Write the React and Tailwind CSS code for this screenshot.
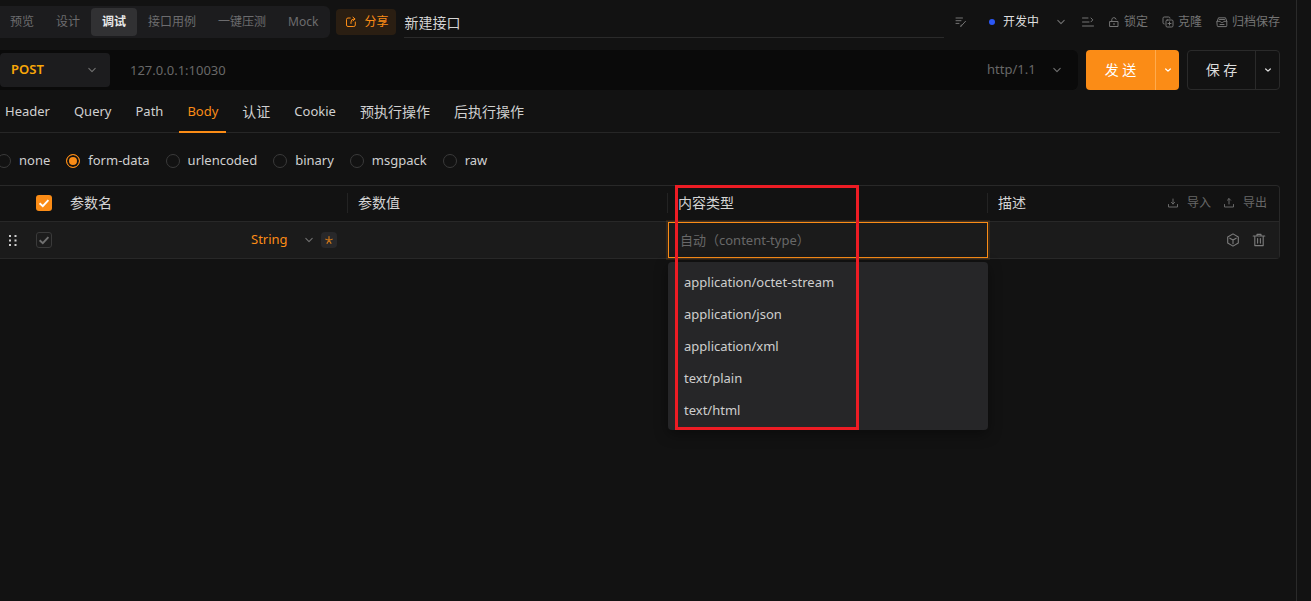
import React from "react";

const MODES = ["预览", "设计", "调试", "接口用例", "一键压测", "Mock"];
const TABS = ["Header", "Query", "Path", "Body", "认证", "Cookie", "预执行操作", "后执行操作"];
const BODY_TYPES = ["none", "form-data", "urlencoded", "binary", "msgpack", "raw"];
const CONTENT_TYPES = [
  "application/octet-stream",
  "application/json",
  "application/xml",
  "text/plain",
  "text/html",
];

const isLatin = (text) => /^[\x00-\x7f]+$/.test(text);

function Icon({ className = "size-3", box = 12, sw = 1, children }) {
  return (
    <svg
      viewBox={`0 0 ${box} ${box}`}
      className={`shrink-0 ${className}`}
      fill="none"
      stroke="currentColor"
      strokeWidth={sw}
      strokeLinecap="round"
      strokeLinejoin="round"
      aria-hidden="true"
    >
      {children}
    </svg>
  );
}

function Chevron() {
  return (
    <Icon sw={1.1}>
      <path d="M2.800 4.400 6 7.600l3.200-3.200" />
    </Icon>
  );
}

function Picker({ label, options, className, text, chevron }) {
  return (
    <div className={`grid items-center ${className}`}>
      <select
        aria-label={label}
        className={`col-start-1 row-start-1 h-full w-full appearance-none bg-transparent outline-none ${text}`}
      >
        {options.map((option) => (
          <option key={option}>{option}</option>
        ))}
      </select>
      <span className={`pointer-events-none col-start-1 row-start-1 justify-self-end text-[#707070] ${chevron}`}>
        <Chevron />
      </span>
    </div>
  );
}

function ToolButton({ label, children }) {
  return (
    <button type="button" className="flex items-center gap-1 text-xs text-[#747474]">
      {children}
      {label}
    </button>
  );
}

function Toolbar() {
  return (
    <div className="flex h-8 items-center">
      <nav className="-ml-px flex h-8 items-center rounded-r-md bg-[#1c1c1e] pr-px">
        {MODES.map((mode) => (
          <button
            key={mode}
            type="button"
            className={
              mode === "调试"
                ? "h-7 rounded bg-[#313133] px-[11px] text-xs font-bold text-[#e8e8e8]"
                : "h-7 px-[11px] text-xs text-[#6c6c6e]"
            }
          >
            {mode}
          </button>
        ))}
      </nav>
      <button
        type="button"
        className="ml-1.5 flex h-[26px] items-center gap-1.5 rounded bg-[#2a1e12] px-2 text-xs text-[#fb8c16]"
      >
        <Icon className="size-3.5" box={14}>
          <path d="M6.300 3H4A1.500 1.500 0 0 0 2.500 4.500v5.500A1.500 1.500 0 0 0 4 11.500h5.800a1.500 1.500 0 0 0 1.500-1.500V7" />
          <path d="M7 8.500V7A3 3 0 0 1 10 4M9 2.200 11.100 4 9 5.800" />
        </Icon>
        分享
      </button>
      <input
        aria-label="接口名称"
        defaultValue="新建接口"
        className="ml-2 h-8 min-w-0 flex-1 border-b border-[#2a2a2a] bg-transparent text-sm text-[#d4d4d4] outline-none"
      />
      <div className="flex items-center pl-[11px] text-[#747474]">
        <button type="button" aria-label="编辑描述">
          <Icon>
            <path d="M1 2h6.500M1 4.700h5M1 7.400h3M6 10.300l4.500-5M5.900 10.400l.3-1.400" />
          </Icon>
        </button>
        <span className="ml-[22px] size-1.5 rounded-full bg-[#2b57f5]" />
        <Picker
          label="状态"
          options={["开发中"]}
          className="ml-2 h-6 w-16"
          text="text-xs text-[#dedede]"
          chevron=""
        />
        <button type="button" aria-label="收起" className="ml-[15px] mr-3.5">
          <Icon>
            <path d="M.5 2h5.500M.5 6h6.500M.5 10h11M9 2l1.800 1.900L9 5.800" />
          </Icon>
        </button>
        <div className="flex items-center gap-3.5">
          <ToolButton label="锁定">
            <Icon>
              <path d="M2 5.500h8v5H2zM3.800 5.300V3.700a2.200 2.200 0 0 1 4.300-.5M6 7.400v1.300" />
            </Icon>
          </ToolButton>
          <ToolButton label="克隆">
            <Icon>
              <rect x="4" y="4" width="7" height="7" rx="1.200" />
              <path d="M2.200 8a1.200 1.200 0 0 1-1.200-1.200V2.200A1.200 1.200 0 0 1 2.200 1h4.600A1.200 1.200 0 0 1 8 2.200M7.500 6v3M6 7.500h3" />
            </Icon>
          </ToolButton>
          <ToolButton label="归档保存">
            <Icon>
              <path d="M1.200 5.300 2.500 1.800h7l1.300 3.500M3.500 3.500h5M1.200 5.300h2.900c.3 1 1 1.200 1.900 1.200s1.600-.2 1.900-1.200h2.900v4.500a.8.8 0 0 1-.8.8H2a.8.8 0 0 1-.8-.8zM4 8.500h4" />
            </Icon>
          </ToolButton>
        </div>
      </div>
    </div>
  );
}

function SplitButton({ label, className, divider }) {
  return (
    <div className={`flex h-10 w-[93px] items-stretch overflow-hidden rounded ${className}`}>
      <button type="button" className="flex-1 whitespace-pre text-sm">
        {label}
      </button>
      <button
        type="button"
        aria-label={`${label} 更多`}
        className={`flex w-6 items-center justify-center border-l ${divider}`}
      >
        <Icon className="size-2.5" sw={1.500}>
          <path d="M3.200 4.800 6 7.400l2.800-2.600" />
        </Icon>
      </button>
    </div>
  );
}

function RequestBar() {
  return (
    <div className="mt-3 flex items-center gap-2">
      <div className="flex h-10 min-w-0 flex-1 items-center rounded-r-md bg-[#0a0a0a] pr-[15px]">
        <Picker
          label="请求方法"
          options={["POST"]}
          className="h-[34px] w-[110px] rounded bg-[#1c1c1e]"
          text="pl-[11px] text-[13px] font-semibold text-[#f9a708]"
          chevron="mr-3"
        />
        <input
          aria-label="请求地址"
          placeholder="127.0.0.1:10030"
          className="h-8 min-w-0 flex-1 bg-transparent pl-5 text-[13px] outline-none placeholder:text-[#686868]"
        />
        <Picker
          label="协议"
          options={["http/1.1"]}
          className="h-8 w-[76px]"
          text="text-[13px] text-[#686868]"
          chevron=""
        />
      </div>
      <SplitButton label="发 送" className="bg-[#fb8c16] text-white" divider="border-[#ffab4d]" />
      <SplitButton label="保 存" className="border border-[#2a2a2a] text-[#dcdcdc]" divider="border-[#2a2a2a]" />
    </div>
  );
}

function CheckBox({ label, active }) {
  return (
    <label className="mx-auto grid size-4">
      <input
        type="checkbox"
        defaultChecked
        aria-label={label}
        className={
          active
            ? "col-start-1 row-start-1 size-4 appearance-none rounded-[3px] bg-[#fb8c16]"
            : "col-start-1 row-start-1 size-4 appearance-none rounded-[3px] border border-[#3a3a3a] bg-[#1c1c1c]"
        }
      />
      <span
        className={
          active
            ? "pointer-events-none col-start-1 row-start-1 place-self-center text-white"
            : "pointer-events-none col-start-1 row-start-1 place-self-center text-[#707070]"
        }
      >
        <Icon sw={1.900}>
          <path d="M1.600 6.200 4.800 9.200l5.600-6" strokeLinecap="butt" strokeLinejoin="miter" />
        </Icon>
      </span>
    </label>
  );
}

function HeadCell({ children, action, last }) {
  return (
    <th scope="col" className="p-0 text-left text-sm font-normal text-[#d4d4d4]">
      <div className={`flex h-5 items-center pl-2.5 pr-3 ${last ? "" : "border-r border-[#232323]"}`}>
        <span className="flex-1">{children}</span>
        {action}
      </div>
    </th>
  );
}

function ParamTable() {
  return (
    <div className="relative mt-3.5 rounded-r border-y border-r border-[#282828]">
      <table className="w-full table-fixed border-collapse">
        <colgroup>
          <col className="w-7" />
          <col className="w-8" />
          <col className="w-72" />
          <col className="w-80" />
          <col className="w-80" />
          <col />
        </colgroup>
        <thead>
          <tr className="h-[35px] border-b border-[#282828]">
            <td />
            <td className="p-0">
              <CheckBox label="全选" active />
            </td>
            <HeadCell>参数名</HeadCell>
            <HeadCell>参数值</HeadCell>
            <HeadCell>内容类型</HeadCell>
            <HeadCell
              last
              action={
                <span className="flex items-center gap-3 text-xs text-[#686868]">
                  <button type="button" className="flex items-center gap-2">
                    <Icon>
                      <path d="M1.500 7.500v2.500h9V7.500M6 2v5M4.400 5.400 6 7l1.600-1.600" />
                    </Icon>
                    导入
                  </button>
                  <button type="button" className="flex items-center gap-2">
                    <Icon>
                      <path d="M1.500 7.500v2.500h9V7.500M6 7V1.600M4.400 3.200 6 1.600l1.600 1.600" />
                    </Icon>
                    导出
                  </button>
                </span>
              }
            >
              描述
            </HeadCell>
          </tr>
        </thead>
        <tbody>
          <tr className="h-9 bg-[#1b1b1b]">
            <td className="p-0">
              <svg viewBox="0 0 8 11" className="ml-[9px] mt-0.5 h-[11px] w-2 fill-[#cfcfcf]" aria-hidden="true">
                <path d="M0 0h2v2H0zM5.500 0h2v2h-2zM0 4.500h2v2H0zM5.500 4.500h2v2h-2zM0 9h2v2H0zM5.500 9h2v2h-2z" />
              </svg>
            </td>
            <td className="p-0">
              <CheckBox label="启用参数" />
            </td>
            <td className="p-0">
              <div className="flex items-center justify-end gap-1.5 pr-[11px]">
                <Picker
                  label="参数类型"
                  options={["String"]}
                  className="h-6 w-16"
                  text="text-[13px] text-[#fb8c16]"
                  chevron=""
                />
                <button
                  type="button"
                  aria-label="必填"
                  className="flex size-4 items-center justify-center rounded-sm bg-[#28282a] text-[#c9741a]"
                >
                  <Icon sw={1.200}>
                    <path d="M6 2.600v3.600M6 6.200 2.800 5.200M6 6.200l3.200-1M6 6.200 4 9.300M6 6.200l2 3.100" />
                  </Icon>
                </button>
              </div>
            </td>
            <td />
            <td className="relative p-0 align-top">
              <input
                role="combobox"
                aria-expanded="true"
                aria-controls="content-types"
                aria-label="内容类型"
                placeholder="自动（content-type）"
                className="block h-9 w-full border border-[#fb8c16] bg-transparent pl-[11px] text-[13px] shadow-[0_0_0_2px_rgba(251,140,22,0.12)] outline-none placeholder:text-[#686868]"
              />
              <ul
                id="content-types"
                role="listbox"
                className="absolute left-0 top-10 w-full rounded bg-[#262628] py-1 shadow-[0_4px_14px_rgba(0,0,0,0.4)]"
              >
                {CONTENT_TYPES.map((type) => (
                  <li
                    key={type}
                    role="option"
                    aria-selected="false"
                    className="h-8 px-4 text-[13px] leading-8 text-[#cecece]"
                  >
                    {type}
                  </li>
                ))}
              </ul>
            </td>
            <td className="p-0">
              <div className="flex items-center justify-end gap-3 pr-[13px] text-[#7c7c7c]">
                <button type="button" aria-label="参数设置">
                  <Icon className="size-3.5" box={14} sw={1.100}>
                    <path d="M7 .9 12.300 4v6L7 13.100 1.700 10V4zM3.800 5.200 7 7l3.200-1.800M7 7v3.700" />
                  </Icon>
                </button>
                <button type="button" aria-label="删除">
                  <Icon className="size-3.5" box={14} sw={1.100}>
                    <path d="M1.200 3h11.600M5 3V1.400h4V3M2.800 3v9.600h8.400V3M5.600 5.600v4.500M8.400 5.600v4.500" />
                  </Icon>
                </button>
              </div>
            </td>
          </tr>
        </tbody>
      </table>
      <div className="pointer-events-none absolute -top-px left-[675px] h-[245px] w-[184px] border-3 border-[#ed1c24]" />
    </div>
  );
}

export default function App() {
  return (
    <div className="flex min-h-screen bg-[#121212] font-['Noto_Sans','Noto_Sans_CJK_SC',sans-serif] text-[#d0d0d0]">
      <main className="min-w-0 flex-1 overflow-x-clip border-r border-[#2a2a2a] pr-4 pt-1.5">
        <Toolbar />
        <RequestBar />
        <nav className="-ml-[3px] flex h-[43px] gap-2 border-b border-[#262626]">
          {TABS.map((tab) => (
            <button
              key={tab}
              type="button"
              className={`-mb-px border-b-2 px-2 pt-0.5 ${isLatin(tab) ? "text-[13px]" : "text-sm"} ${
                tab === "Body" ? "border-[#fb8c16] text-[#fb8c16]" : "border-transparent"
              }`}
            >
              {tab}
            </button>
          ))}
        </nav>
        <fieldset className="-ml-[3px] mt-[18px] flex h-5 items-center gap-4">
          {BODY_TYPES.map((type) => (
            <label key={type} className="flex items-center gap-2 text-[13px]">
              <input
                type="radio"
                name="body-type"
                defaultChecked={type === "form-data"}
                className="size-3.5 appearance-none rounded-full border border-[#3a3a3a] checked:border-[#fb8c16] checked:bg-[#fb8c16] checked:shadow-[inset_0_0_0_2px_#121212]"
              />
              {type}
            </label>
          ))}
        </fieldset>
        <ParamTable />
      </main>
      <aside className="w-3.5 shrink-0" />
    </div>
  );
}
